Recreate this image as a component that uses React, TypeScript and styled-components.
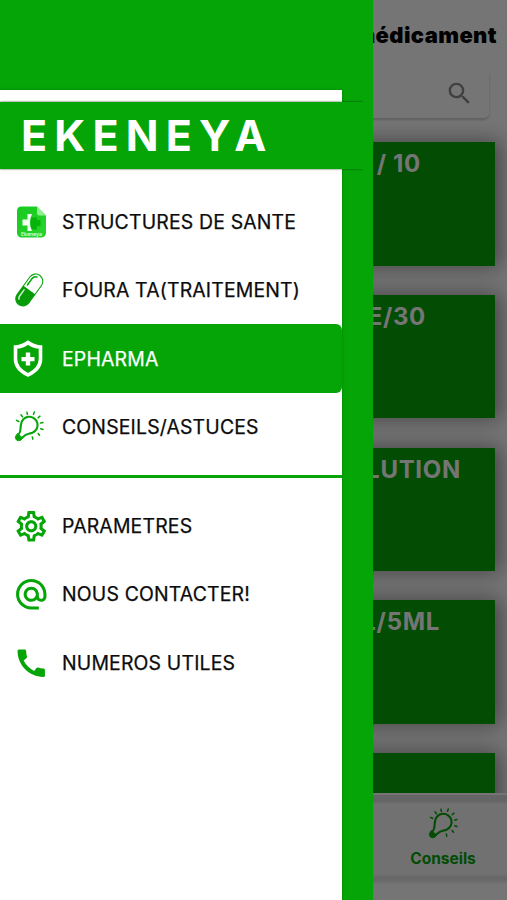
import React from "react";
import styled, { createGlobalStyle } from "styled-components";
import { MdAlternateEmail, MdCall, MdOutlineSettings, MdSearch } from "react-icons/md";

const GREEN = "#05a507";

const Global = createGlobalStyle`
  * { box-sizing: border-box; }
  body { margin: 0; background: #fff; font-family: Inter, "Liberation Sans", sans-serif; font-optical-sizing: none; }
`;

const Phone = styled.div`
  position: relative;
  width: 507px;
  height: 900px;
  overflow: hidden;
`;

const Screen = styled.div`
  display: flex;
  flex-direction: column;
  height: 100%;
  background: #fff;
`;

const TopBar = styled.header`
  flex: none;
  display: flex;
  justify-content: flex-end;
  align-items: center;
  height: 70px;
  padding-right: 10px;
  font-size: 22px;
  font-weight: 900;
  letter-spacing: 0.4px;
  color: #000;
`;

const SearchBox = styled.div`
  flex: none;
  display: flex;
  justify-content: flex-end;
  align-items: center;
  height: 48px;
  margin: 0 18px 24px 12px;
  padding: 0 15px 1px;
  border-radius: 5px;
  background: #fff;
  box-shadow: 0 2px 3px rgba(0, 0, 0, 0.2);
  color: #8c8c8c;
`;

const CardList = styled.main`
  flex: 1;
  min-height: 0;
  display: flex;
  flex-direction: column;
  gap: 29.3px;
  padding: 0 12px;
  overflow: hidden;
  margin-top: -20px;
  padding-top: 20px;
`;

const Card = styled.article<{ $inset: number }>`
  flex: none;
  height: 123.5px;
  padding: 7px ${(p) => p.$inset}px 0 0;
  background: ${GREEN};
  box-shadow: 4px 0 20px 1px rgba(0, 0, 0, 0.42);
  color: #fff;
  font-size: 24px;
  line-height: 30px;
  font-weight: 700;
  letter-spacing: 0.7px;
  text-align: right;
  white-space: pre;
`;

const BottomNav = styled.nav`
  position: relative;
  flex: none;
  display: flex;
  justify-content: flex-end;
  height: 107px;
  border-top: 2px solid #fff;
  background: linear-gradient(#dcdcdc 0, #dcdcdc 6px, #f7f7f7 9px, #f7f7f7 79px, #e3e3e3 82px, #e3e3e3 85px, #fff 90px);
`;

const NavTab = styled.div`
  display: flex;
  flex-direction: column;
  align-items: center;
  width: 128px;
  padding-top: 13px;
  gap: 10px;
  color: ${GREEN};
  font-size: 15.5px;
  line-height: 20px;
  font-weight: 700;
`;

const Scrim = styled.div`
  position: absolute;
  inset: 0;
  background: rgba(0, 0, 0, 0.54);
`;

const Drawer = styled.aside`
  position: absolute;
  inset: 0 auto 0 0;
  width: 372.5px;
  padding-top: 90px;
  background: ${GREEN};
`;

const Panel = styled.div`
  width: 342px;
  height: 810px;
  padding-top: 11.5px;
  background: #fff;
  box-shadow: 0 0 3px rgba(0, 60, 0, 0.35);
`;

const Banner = styled.div`
  width: 363px;
  height: 67.5px;
  padding-left: 21px;
  background: ${GREEN};
  box-shadow: 0 0 2px rgba(0, 50, 0, 0.8);
  clip-path: inset(-3px 0 -3px 0);
  color: #fff;
  font-size: 43px;
  line-height: 67px;
  font-weight: 700;
  letter-spacing: 7.2px;
`;

const Menu = styled.ul<{ $top: number }>`
  list-style: none;
  margin: 0;
  padding: ${(p) => p.$top}px 0 0;
`;

const MenuItem = styled.li<{ $active?: boolean }>`
  display: flex;
  align-items: center;
  height: 68.4px;
  padding-top: ${(p) => (p.$active ? 1 : 0)}px;
  border-radius: 0 6px 6px 0;
  background: ${(p) => (p.$active ? GREEN : "transparent")};
  color: ${(p) => (p.$active ? "#fff" : "#0c0c0c")};
  font-size: 19.4px;
  font-weight: 400;
  letter-spacing: 0.18px;
  -webkit-text-stroke: 0.25px currentColor;
`;

const IconSlot = styled.span<{ $left: number }>`
  flex: none;
  display: flex;
  width: 62px;
  padding-left: ${(p) => p.$left}px;
  color: ${GREEN};
`;

const Divider = styled.hr`
  margin: 13.5px 0 0;
  border: 0;
  height: 3px;
  background: ${GREEN};
`;

const ClinicIcon = () => (
  <svg width="31" height="32" viewBox="0 0 31 32">
    <defs>
      <linearGradient id="clinic" x1="0" y1="0" x2="1" y2="1">
        <stop offset="0" stopColor="#18c91f" />
        <stop offset="1" stopColor="#28d52d" />
      </linearGradient>
    </defs>
    <path d="M5 .5h16L30 9.5V27a4.500 4.500 0 0 1-4.500 4.500h-20A4.500 4.500 0 0 1 1 27V5A4.500 4.500 0 0 1 5 .5z" fill="url(#clinic)" />
    <path d="M21 .5 30 9.500h-6.500a2.500 2.500 0 0 1-2.500-2.500z" fill="#8df28d" />
    <path d="M11.500 8H16q-4 8 0 17h-4.500v-5.500H6.500v-6h5z" fill="#f3fff3" />
    <path d="M15.500 11.500h5.500v2.500h3.500v6H21v3.500h-5q-3-6-.5-12z" fill="#07b30b" />
    <text x="15.500" y="30" textAnchor="middle" fontSize="5.200" fontWeight="600" fill="#d8ffd8" fontFamily="Inter" letterSpacing="0" stroke="none">Ekeneya</text>
  </svg>
);

const PillIcon = () => (
  <svg width="31" height="36" viewBox="0 0 31 36">
    <g transform="translate(15.300 18) rotate(36)">
      <rect x="-7.200" y="-18" width="14.400" height="36" rx="7.200" fill="#fff" stroke={GREEN} strokeWidth="1.100" />
      <path d="M-7.200 0H7.200V10.800a7.200 7.200 0 0 1-14.400 0z" fill="#079b08" />
      <path d="M-4.500-3V-10.500q0-3.500 3-4.500" fill="none" stroke={GREEN} strokeWidth="1.600" strokeLinecap="round" />
      <path d="M-4.300 3v7.500q0 2 1.300 3" fill="none" stroke="#c9f5c9" strokeWidth="1.500" strokeLinecap="round" />
    </g>
  </svg>
);

const ShieldIcon = () => (
  <svg width="30" height="38" viewBox="0 0 30 38">
    <path d="M15 2.500Q20 6.500 27.500 7V19Q27.500 29 15 35Q2.500 29 2.500 19V7Q10 6.500 15 2.500Z" fill="none" stroke="#fff" strokeWidth="3.600" />
    <path d="M15 12.600v13M8.500 19.100h13" stroke="#fff" strokeWidth="4.400" fill="none" />
  </svg>
);

const BulbIcon = () => (
  <svg width="30" height="31" viewBox="0 0 30 31" fill="none" stroke={GREEN} strokeLinecap="round">
    <path d="M4.500 23.500C7.500 20.500 6 17.500 7 13.500A8.300 8.300 0 1 1 18.500 21.700C14.500 23 12.500 22 8.300 26.500" strokeWidth="2.100" />
    <path d="M3.700 22.800 8.800 27.200 6.800 29.200Q4.300 30.500 2.300 28.800Q.6 26.700 1.900 24.700Z" fill={GREEN} strokeWidth="1" />
    <path d="m2.500 9.300 2.200 1.200M7 3.800l1.500 2M13 1.200l.4 2.300M20.300 1l-.8 2.300M26 5.200l-1.800 1.500M29 11.500l-2.300.5M29 18.500l-2.300-.8M25.500 24.300l-1.400-1.800M18.800 28.200l-.5-2.300" strokeWidth="1.500" />
  </svg>
);

const cards = [
  { text: "/ 10", inset: 74 },
  { text: "E/30", inset: 69 },
  { text: "SOLUTION", inset: 34 },
  { text: "ML/5ML", inset: 55 },
  { text: "", inset: 55 },
];

const mainItems = [
  { label: "STRUCTURES DE SANTE", icon: <ClinicIcon />, left: 16 },
  { label: "FOURA TA(TRAITEMENT)", icon: <PillIcon />, left: 14 },
  { label: "EPHARMA", icon: <ShieldIcon />, left: 12.5, active: true },
  { label: "CONSEILS/ASTUCES", icon: <BulbIcon />, left: 14 },
];

const otherItems = [
  { label: "PARAMETRES", icon: <MdOutlineSettings size={36.5} />, left: 13.2 },
  { label: "NOUS CONTACTER!", icon: <MdAlternateEmail size={36.5} />, left: 13.2 },
  { label: "NUMEROS UTILES", icon: <MdCall size={36.5} />, left: 13.2 },
];

export default function App() {
  return (
    <Phone>
      <Global />
      <Screen>
        <TopBar>Rechercher médicament</TopBar>
        <SearchBox>
          <MdSearch size={29} />
        </SearchBox>
        <CardList>
          {cards.map((c, i) => (
            <Card key={i} $inset={c.inset}>{c.text}</Card>
          ))}
        </CardList>
        <BottomNav>
          <NavTab>
            <BulbIcon />
            Conseils
          </NavTab>
        </BottomNav>
      </Screen>
      <Scrim />
      <Drawer>
        <Panel>
          <Banner>EKENEYA</Banner>
          <Menu $top={18.5}>
            {mainItems.map((m) => (
              <MenuItem key={m.label} $active={m.active}>
                <IconSlot $left={m.left}>{m.icon}</IconSlot>
                {m.label}
              </MenuItem>
            ))}
          </Menu>
          <Divider />
          <Menu $top={14.3}>
            {otherItems.map((m) => (
              <MenuItem key={m.label}>
                <IconSlot $left={m.left}>{m.icon}</IconSlot>
                {m.label}
              </MenuItem>
            ))}
          </Menu>
        </Panel>
      </Drawer>
    </Phone>
  );
}
